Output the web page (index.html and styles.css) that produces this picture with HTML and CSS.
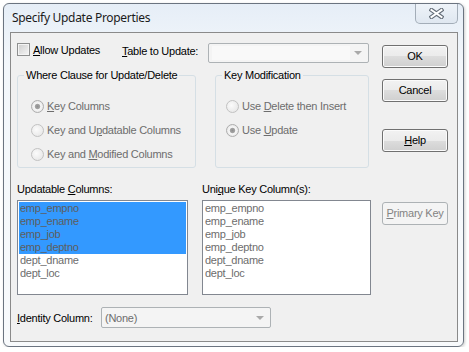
FILE: index.html
```html
<!DOCTYPE html>
<html>
<head>
  <title>Specify Update Properties</title>
  <meta charset="UTF-8">
  <link rel="stylesheet" href="styles.css">
</head>
<body>
  <div class="window">
    <div class="titlebar">
      <span class="title">Specify Update Properties</span>
      <span class="close">
        <svg width="15" height="11" viewBox="0 0 15 11">
          <path d="M2.5 2 L12.5 9 M12.5 2 L2.5 9" stroke="#636c77" stroke-width="4.2" stroke-linecap="square" fill="none"/>
          <path d="M2.5 2 L12.5 9 M12.5 2 L2.5 9" stroke="#ffffff" stroke-width="2" stroke-linecap="square" fill="none"/>
        </svg>
      </span>
    </div>

    <div class="client">
      <div class="main">
        <div class="top-row">
          <div class="allow">
            <span class="checkbox"></span>
            <span class="allow-text"><u>A</u>llow Updates</span>
          </div>
          <span class="table-label"><u>T</u>able to Update:</span>
          <div class="combo combo-table">
            <span class="combo-field"></span>
            <span class="combo-arrow"></span>
          </div>
        </div>

        <div class="groups">
          <div class="group group-where">
            <div class="group-title">Where Clause for Update/Delete</div>
            <div class="radios">
              <div class="radio-row"><span class="radio checked"></span><span><u>K</u>ey Columns</span></div>
              <div class="radio-row"><span class="radio"></span><span>Key and U<u>p</u>datable Columns</span></div>
              <div class="radio-row"><span class="radio"></span><span>Key and <u>M</u>odified Columns</span></div>
            </div>
          </div>
          <div class="group group-key">
            <div class="group-title">Key Modification</div>
            <div class="radios">
              <div class="radio-row"><span class="radio"></span><span>Use <u>D</u>elete then Insert</span></div>
              <div class="radio-row"><span class="radio checked"></span><span>Use <u>U</u>pdate</span></div>
            </div>
          </div>
        </div>

        <div class="list-labels">
          <span class="list-label-left">Updatable <u>C</u>olumns:</span>
          <span>Uni<u>q</u>ue Key Column(s):</span>
        </div>

        <div class="lists">
          <div class="list list-left">
            <div class="item selected">emp_empno</div>
            <div class="item selected">emp_ename</div>
            <div class="item selected">emp_job</div>
            <div class="item selected">emp_deptno</div>
            <div class="item">dept_dname</div>
            <div class="item">dept_loc</div>
          </div>
          <div class="list list-right">
            <div class="item">emp_empno</div>
            <div class="item">emp_ename</div>
            <div class="item">emp_job</div>
            <div class="item">emp_deptno</div>
            <div class="item">dept_dname</div>
            <div class="item">dept_loc</div>
          </div>
        </div>

        <div class="identity-row">
          <span class="identity-label"><u>I</u>dentity Column:</span>
          <div class="combo combo-identity">
            <span class="combo-text">(None)</span>
            <span class="combo-arrow"></span>
          </div>
        </div>
      </div>

      <div class="buttons">
        <div class="btn btn-ok">OK</div>
        <div class="btn btn-cancel">Cancel</div>
        <div class="btn btn-help"><u>H</u>elp</div>
        <div class="btn btn-pk disabled"><u>P</u>rimary Key</div>
      </div>
    </div>
  </div>
</body>
</html>
```

FILE: styles.css
```css
body {
  margin: 0;
  background: #fff;
  font-family: "Liberation Sans", Arial, sans-serif;
  font-size: 11px;
  letter-spacing: -0.25px;
  color: #000;
}

u {
  text-underline-offset: 1px;
}

/* window frame */
.window {
  box-sizing: border-box;
  width: 461px;
  height: 344px;
  margin: 3px 0 0 3px;
  border: 1px solid #6b7480;
  border-radius: 6px;
  background: linear-gradient(#e6eef7, #f3f7fb 60px, #f8fafc);
  box-shadow: 1px 1px 3px rgba(0, 0, 0, 0.2);
}

.titlebar {
  display: flex;
  height: 28px;
  padding: 0 5px 0 8px;
}

.title {
  font-family: "Noto Sans", "Liberation Sans", sans-serif;
  font-size: 12px;
  letter-spacing: -0.3px;
  line-height: 28px;
  color: #1b1b1b;
}

.close {
  box-sizing: border-box;
  display: flex;
  align-items: center;
  justify-content: center;
  width: 43px;
  height: 20px;
  margin-left: auto;
  border: 1px solid #a3adb8;
  border-top: 0;
  border-radius: 0 0 5px 5px;
  background: linear-gradient(#eef3f9, #dfe7f0);
}

.client {
  box-sizing: border-box;
  display: flex;
  width: 448px;
  height: 310px;
  margin-left: 6px;
  border: 1px solid #8a8a8a;
  background: #f0f0f0;
}

.main {
  width: 354px;
  padding-left: 6px;
}

/* first row */
.top-row {
  display: flex;
  height: 21px;
  margin-top: 10px;
}

.allow {
  display: flex;
  width: 105px;
}

.checkbox {
  box-sizing: border-box;
  width: 13px;
  height: 13px;
  margin-right: 3px;
  border: 1px solid #8e8f8f;
  background: linear-gradient(135deg, #cdcdcd, #f6f6f6);
  box-shadow: inset 0 0 0 1px #f4f4f4;
}

.allow-text {
  line-height: 14px;
}

.table-label {
  width: 86px;
  margin-top: 1px;
  line-height: 14px;
}

.combo {
  box-sizing: border-box;
  display: flex;
  align-items: center;
  border: 1px solid #adb2b5;
  border-radius: 2px;
  background: #f4f4f4;
  color: #6d6d6d;
}

.combo-table {
  width: 161px;
  height: 20px;
  padding: 0 0 0 3px;
}

.combo-field {
  width: 138px;
  height: 14px;
  background: #f9f9f9;
}

.combo-arrow {
  width: 0;
  height: 0;
  margin-left: auto;
  margin-right: 6px;
  border-top: 4px solid #a9a9a9;
  border-left: 4px solid transparent;
  border-right: 4px solid transparent;
}

/* group boxes */
.groups {
  display: flex;
  margin-top: 11px;
}

.group {
  box-sizing: border-box;
  height: 93px;
  padding: 0 6px;
  border: 1px solid #d5dfe5;
  border-radius: 3px;
}

.group-where {
  width: 179px;
}

.group-key {
  width: 154px;
  margin-left: 19px;
}

.group-title {
  width: fit-content;
  margin-top: -8px;
  padding: 0 2px;
  background: #f0f0f0;
  line-height: 14px;
}

.radios {
  margin-top: 12px;
  padding-left: 7px;
  color: #6d6d6d;
}

.group-key .radios {
  padding-left: 4px;
}

.radio-row {
  display: flex;
  align-items: center;
  height: 24px;
}

.radio {
  box-sizing: border-box;
  width: 13px;
  height: 13px;
  margin-right: 3px;
  border: 1px solid #c2c2c2;
  border-radius: 50%;
  background: radial-gradient(circle at 40% 40%, #fbfbfb, #e3e3e3);
}

.radio.checked {
  border-color: #adadad;
  background: radial-gradient(circle, #8f8f8f 0, #a3a3a3 2.2px, #f7f7f7 3.2px, #e6e6e6 6px);
}

/* column lists */
.list-labels {
  display: flex;
  margin-top: 14px;
  line-height: 14px;
}

.list-label-left {
  width: 185px;
}

.lists {
  display: flex;
  margin-top: 4px;
}

.list {
  box-sizing: border-box;
  height: 95px;
  padding: 1px;
  border: 1px solid #828790;
  background: #fff;
  color: #6d6d6d;
}

.list-left {
  width: 171px;
}

.list-right {
  width: 169px;
  margin-left: 14px;
}

.item {
  padding-left: 1px;
  line-height: 13px;
}

.item.selected {
  background: #3399ff;
  color: #5e5e5e;
}

/* identity row */
.identity-row {
  display: flex;
  align-items: center;
  margin-top: 12px;
}

.identity-label {
  width: 84px;
}

.combo-identity {
  width: 170px;
  height: 21px;
  padding-left: 3px;
}

/* buttons */
.buttons {
  display: flex;
  flex-direction: column;
  width: 66px;
  margin-left: 11px;
  padding-top: 12px;
}

.btn {
  box-sizing: border-box;
  height: 23px;
  border: 1px solid #707070;
  border-radius: 3px;
  background: linear-gradient(#f2f2f2 0%, #ebebeb 50%, #dddddd 50%, #cfcfcf 100%);
  box-shadow: inset 0 0 0 1px #fbfbfb;
  line-height: 21px;
  text-align: center;
}

.btn-cancel {
  margin-top: 11px;
}

.btn-help {
  margin-top: 27px;
}

.btn-pk {
  margin-top: 50px;
}

.btn.disabled {
  border-color: #adb2b5;
  background: #f4f4f4;
  box-shadow: none;
  color: #838383;
}
```
